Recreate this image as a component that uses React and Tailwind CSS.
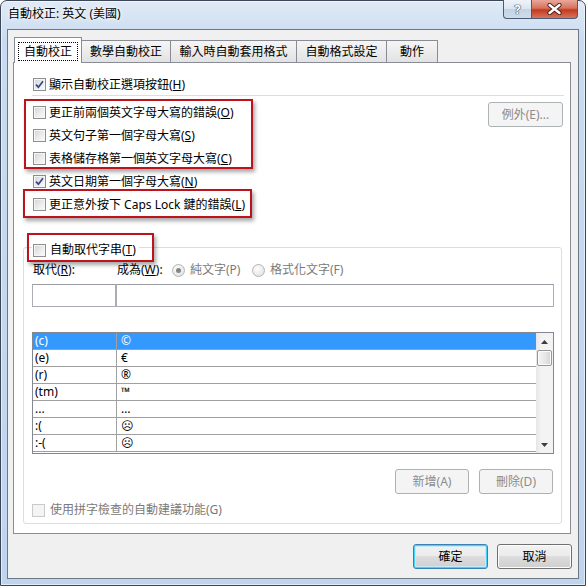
import React from 'react'

const Check = ({ checked, disabled }) => (
  <span
    className={`flex h-[13px] w-[13px] shrink-0 items-center justify-center border ${
      disabled
        ? 'border-[#cacaca] bg-[#f4f4f4]'
        : 'border-[#8e8f8f] bg-[linear-gradient(135deg,#cfd2d6_0%,#ececec_55%,#fbfbfb_100%)] shadow-[inset_0_0_0_1px_#f6f6f6]'
    }`}
  >
    {checked && (
      <svg width="9" height="9" viewBox="0 0 9 9">
        <path d="M1 4.6 L3.4 7.2 L8 1.2" fill="none" stroke="#33478a" strokeWidth="1.7" />
      </svg>
    )}
  </span>
)

const Radio = ({ on }) => (
  <span className="flex h-[13px] w-[13px] shrink-0 items-center justify-center rounded-full border border-[#b4b4b4] bg-[radial-gradient(circle_at_40%_35%,#fdfdfd,#dedede)]">
    {on && <span className="h-[5px] w-[5px] rounded-full bg-[#858585]" />}
  </span>
)

const Btn = ({ children, disabled, primary, className = '' }) => {
  let skin =
    'border-[#707070] bg-[linear-gradient(180deg,#f2f2f2_0%,#ebebeb_50%,#dddddd_50%,#cfcfcf_100%)] shadow-[inset_0_0_0_1px_#fcfcfc] text-black'
  if (disabled) skin = 'border-[#adb2b5] bg-[#f4f4f4] text-[#8b8b8b]'
  if (primary)
    skin =
      'border-[#3c7fb1] bg-[linear-gradient(180deg,#f2f2f2_0%,#ebebeb_50%,#dddddd_50%,#cfcfcf_100%)] shadow-[inset_0_0_0_1px_#48d1f9,inset_0_0_0_2px_#c2ecfb] text-black'
  return (
    <div className={`flex h-[25px] items-center justify-center rounded-[3px] border leading-[16px] ${skin} ${className}`}>
      {children}
    </div>
  )
}

const RedBox = ({ className }) => (
  <span
    className={`pointer-events-none absolute border-2 border-[#c0121c] shadow-[2px_3px_4px_rgba(0,0,0,0.35)] ${className}`}
  />
)

const Opt = ({ checked, children }) => (
  <div className="ml-[19px] flex h-[23px] items-center gap-[3px] leading-[16px]">
    <Check checked={checked} />
    <span>{children}</span>
  </div>
)

const Tab = ({ w, children }) => (
  <div
    className={`-ml-px flex h-[22px] items-center justify-center border border-b-0 border-[#898c95] bg-[linear-gradient(180deg,#f5f5f5_0%,#ececec_50%,#e2e2e2_100%)] leading-[16px] ${w}`}
  >
    {children}
  </div>
)

const rows = [
  ['(c)', '©'],
  ['(e)', '€'],
  ['(r)', '®'],
  ['(tm)', '™'],
  ['...', '…'],
  [':(', '☹'],
  [':-(', '☹'],
]

export default function App() {
  return (
    <div className="flex h-[586px] w-[586px] flex-col rounded-t-[7px] border border-[#3b4658] bg-[linear-gradient(180deg,#e0eaf6_0%,#c9dbf0_40px,#bfd4ee_100%)] px-[6px] pb-[6px] font-['Noto_Sans','Noto_Sans_CJK_TC','DejaVu_Sans',sans-serif] text-[12px] text-black shadow-[inset_0_0_0_1px_rgba(255,255,255,0.55)]">
      {/* title bar */}
      <div className="-mt-px flex h-[29px] items-start justify-between">
        <div className="ml-px mt-[6px] leading-[16px] [text-shadow:0_0_6px_#ffffff,0_0_3px_#ffffff]">
          自動校正: 英文 (美國)
        </div>
        <div className="mr-px flex">
          <div className="flex h-[19px] w-[29px] items-center justify-center rounded-bl-[4px] border border-t-0 border-[#4a5b74] bg-[linear-gradient(180deg,#eef3f9_0%,#dbe5f1_50%,#c3d2e4_50%,#cfdcec_100%)]">
            <span className="text-[13px] font-bold leading-none text-white [text-shadow:0_0_1px_#2c3d55,0_0_1px_#2c3d55,0_0_1px_#2c3d55]">
              ?
            </span>
          </div>
          <div className="flex h-[19px] w-[46px] items-center justify-center rounded-br-[4px] border border-l-0 border-t-0 border-[#4a5b74] bg-[linear-gradient(180deg,#e9a89a_0%,#d6735e_45%,#c3391f_55%,#d5765c_100%)]">
            <svg width="17" height="12" viewBox="0 0 17 12">
              <path d="M3.5 2 L13.5 10 M13.5 2 L3.5 10" stroke="#4a1f17" strokeWidth="4.2" strokeLinecap="round" />
              <path d="M3.5 2 L13.5 10 M13.5 2 L3.5 10" stroke="#ffffff" strokeWidth="2.4" strokeLinecap="round" />
            </svg>
          </div>
        </div>
      </div>

      {/* client area */}
      <div className="flex flex-1 flex-col border border-[#6d7785] bg-[#f0f0f0] pl-[5px] pr-[7px] pt-[7px]">
        {/* tabs */}
        <div className="flex h-[25px] items-end pl-[1px]">
          <div className="relative z-10 -mb-px flex h-[26px] w-[68px] justify-center border border-b-0 border-[#898c95] bg-white pt-[4px]">
            <span className="flex h-[19px] w-[60px] items-center justify-center border border-dotted border-black leading-[16px]">
              自動校正
            </span>
          </div>
          <Tab w="w-[90px]">數學自動校正</Tab>
          <Tab w="w-[127px]">輸入時自動套用格式</Tab>
          <Tab w="w-[91px]">自動格式設定</Tab>
          <Tab w="w-[52px]">動作</Tab>
        </div>

        {/* panel */}
        <div className="flex h-[472px] flex-col border border-[#898c95] bg-white">
          <div className="ml-[19px] mt-[11px] flex h-[21px] items-center gap-[3px] leading-[16px]">
            <Check checked />
            <span>
              顯示自動校正選項按鈕(<u>H</u>)
            </span>
          </div>
          <div className="ml-[18px] mr-[6px] h-px bg-[#d5dfe5]" />

          <div className="flex justify-between">
            <div className="flex-1 pt-[5px]">
              <div className="relative">
                <Opt>
                  更正前兩個英文字母大寫的錯誤(<u>O</u>)
                </Opt>
                <Opt>
                  英文句子第一個字母大寫(<u>S</u>)
                </Opt>
                <Opt>
                  表格儲存格第一個英文字母大寫(<u>C</u>)
                </Opt>
                <RedBox className="left-[10px] top-[-2px] h-[70px] w-[229px]" />
              </div>
              <Opt checked>
                英文日期第一個字母大寫(<u>N</u>)
              </Opt>
              <div className="relative">
                <Opt>
                  更正意外按下 Caps Lock 鍵的錯誤(<u>L</u>)
                </Opt>
                <RedBox className="left-[9px] top-[-4px] h-[29px] w-[229px]" />
              </div>
            </div>
            <Btn disabled className="mr-[7px] mt-[6px] w-[75px]">
              例外(E)...
            </Btn>
          </div>

          {/* group box */}
          <div className="ml-[9px] mr-[8px] mt-[31px] flex flex-col rounded-[3px] border border-[#d5dfe5] pb-[5px]">
            <div className="relative -mt-[6px] ml-[8px] flex h-[16px] items-center gap-[4px] self-start bg-white px-[1px] pr-[3px] leading-[16px]">
              <Check />
              <span>
                自動取代字串(<u>T</u>)
              </span>
              <RedBox className="left-[-5px] top-[-9px] h-[29px] w-[127px]" />
            </div>

            <div className="ml-[9px] mt-[4px] flex h-[16px] items-center leading-[16px]">
              <span className="w-[84px]">
                取代(<u>R</u>):
              </span>
              <span className="w-[55px]">
                成為(<u>W</u>):
              </span>
              <span className="flex w-[80px] items-center gap-[5px] text-[#7a7a7a]">
                <Radio on />
                純文字(P)
              </span>
              <span className="flex items-center gap-[5px] text-[#7a7a7a]">
                <Radio />
                格式化文字(F)
              </span>
            </div>

            <div className="ml-[8px] mr-[7px] mt-[6px] flex h-[23px]">
              <div className="w-[84px] border border-[#abadb3] border-t-[#9a9ca3]" />
              <div className="flex-1 border border-[#abadb3] border-t-[#9a9ca3]" />
            </div>

            {/* list */}
            <div className="ml-[8px] mr-[7px] mt-[25px] flex h-[122px] border border-[#828790] bg-white">
              <div className="flex flex-1 flex-col overflow-hidden">
                {rows.map(([a, b], i) => (
                  <div
                    key={i}
                    className={`flex h-[17px] shrink-0 border-b border-[#a0a0a0] leading-[16px] ${
                      i === 0 ? 'bg-[#3399ff] text-white' : ''
                    }`}
                  >
                    <span className="w-[84px] border-r border-[#a0a0a0] pl-[2px]">{a}</span>
                    <span className="pl-[4px]">{b}</span>
                  </div>
                ))}
              </div>
              <div className="flex w-[17px] flex-col bg-[linear-gradient(90deg,#e6e6e6_0%,#f3f3f3_30%,#f3f3f3_100%)]">
                <div className="flex h-[17px] items-center justify-center">
                  <svg width="7" height="4" viewBox="0 0 7 4">
                    <path d="M0 4 L3.5 0 L7 4 Z" fill="#3d3d3d" />
                  </svg>
                </div>
                <div className="mx-[1px] h-[16px] rounded-[2px] border border-[#979797] bg-[linear-gradient(90deg,#f4f4f4_0%,#e8e8e8_50%,#d4d4d4_100%)] shadow-[inset_0_0_0_1px_#fbfbfb]" />
                <div className="flex-1" />
                <div className="flex h-[17px] items-center justify-center">
                  <svg width="7" height="4" viewBox="0 0 7 4">
                    <path d="M0 0 L7 0 L3.5 4 Z" fill="#3d3d3d" />
                  </svg>
                </div>
              </div>
            </div>

            <div className="mr-[8px] mt-[15px] flex justify-end gap-[10px]">
              <Btn disabled className="w-[74px]">
                新增(A)
              </Btn>
              <Btn disabled className="w-[74px]">
                刪除(D)
              </Btn>
            </div>

            <div className="ml-[8px] mt-[8px] flex h-[16px] items-center gap-[5px] leading-[16px] text-[#7a7a7a]">
              <Check disabled />
              <span>使用拼字檢查的自動建議功能(G)</span>
            </div>
          </div>
        </div>

        {/* dialog buttons */}
        <div className="-mr-px mt-[10px] flex justify-end gap-[9px]">
          <Btn primary className="w-[75px]">
            確定
          </Btn>
          <Btn className="w-[75px]">取消</Btn>
        </div>
      </div>
    </div>
  )
}
